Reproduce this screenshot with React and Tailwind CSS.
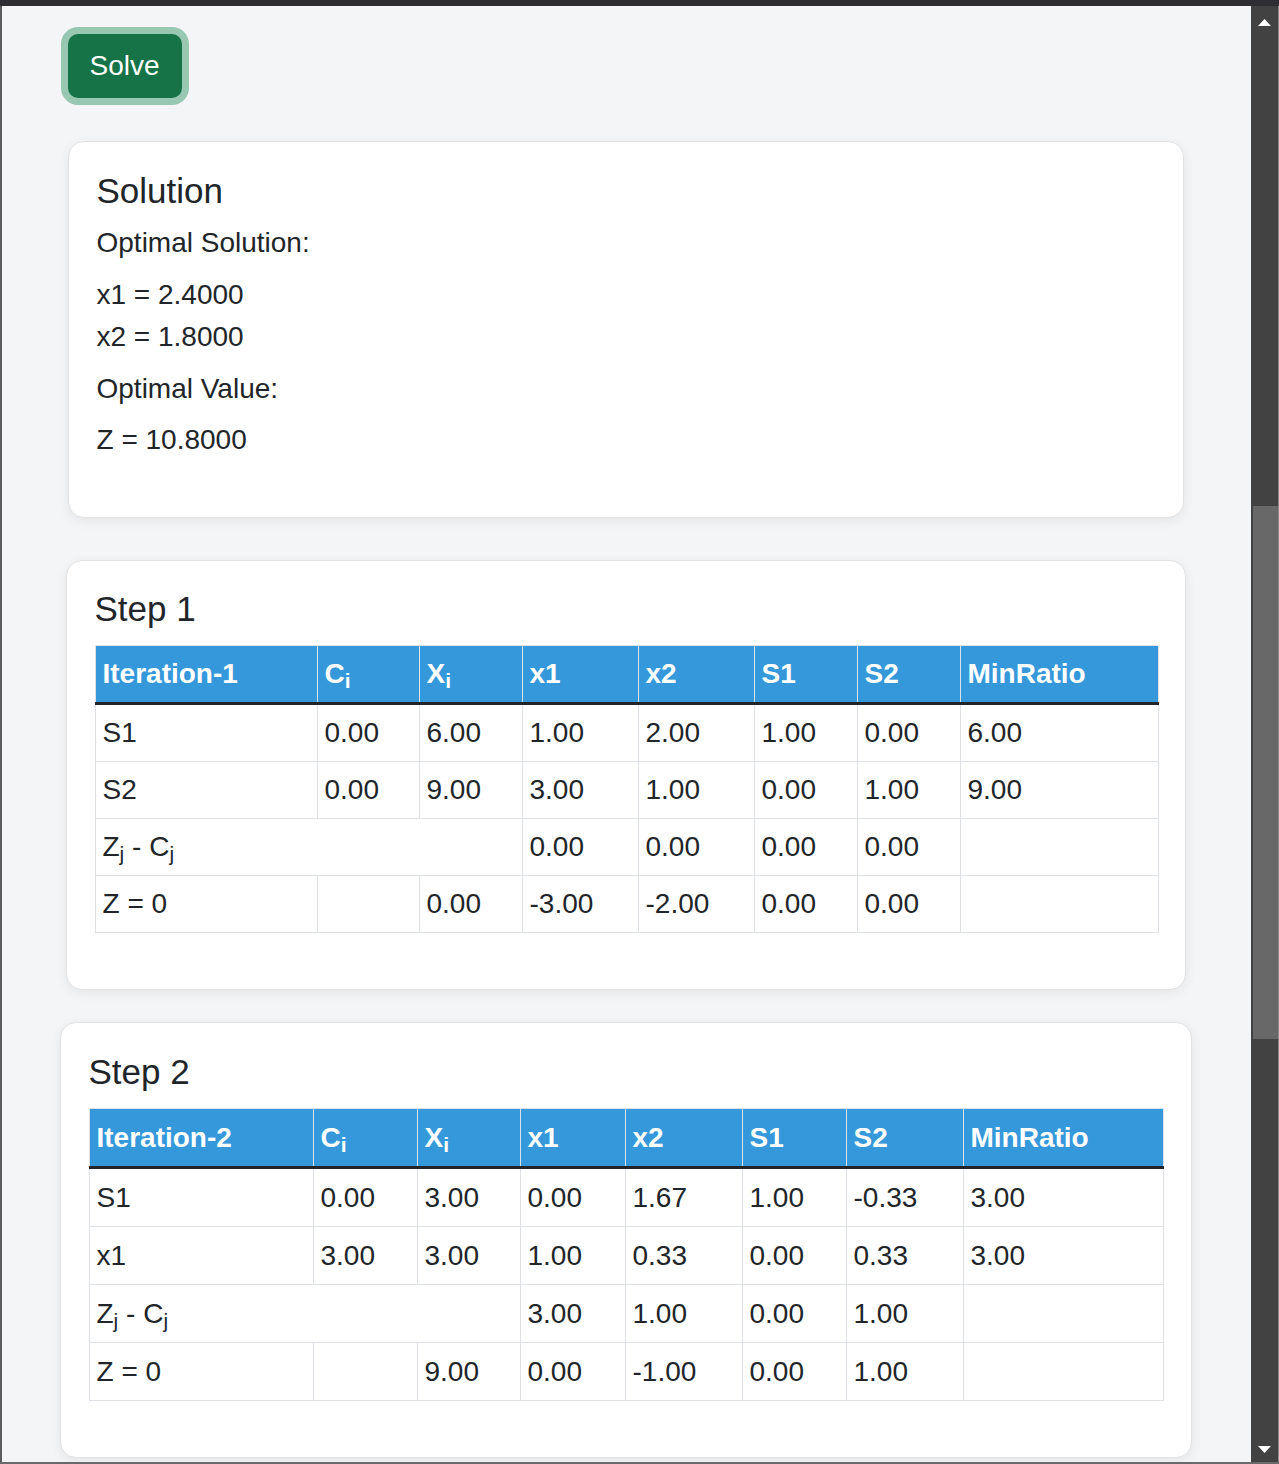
import React from 'react'

const zjcj = (
  <>
    Z<sub>j</sub> - C<sub>j</sub>
  </>
)

const steps = [
  {
    title: 'Step 1',
    label: 'Iteration-1',
    cardClass: 'mt-[42px] w-[1120px] pt-[27px]',
    tableClass: 'w-[1063px]',
    cellPad: 'py-[7px]',
    cols: ['w-[222px]', 'w-[102px]', 'w-[103px]', 'w-[116px]', 'w-[116px]', 'w-[103px]', 'w-[103px]', 'w-[198px]'],
    rows: [
      ['S1', '0.00', '6.00', '1.00', '2.00', '1.00', '0.00', '6.00'],
      ['S2', '0.00', '9.00', '3.00', '1.00', '0.00', '1.00', '9.00'],
      [{ node: zjcj, span: 3 }, '0.00', '0.00', '0.00', '0.00', ''],
      ['Z = 0', '', '0.00', '-3.00', '-2.00', '0.00', '0.00', ''],
    ],
  },
  {
    title: 'Step 2',
    label: 'Iteration-2',
    cardClass: 'mt-[32px] w-[1132px] pt-[28px]',
    tableClass: 'w-[1074px]',
    cellPad: 'py-[7.5px]',
    cols: ['w-[224px]', 'w-[104px]', 'w-[103px]', 'w-[105px]', 'w-[117px]', 'w-[104px]', 'w-[117px]', 'w-[200px]'],
    rows: [
      ['S1', '0.00', '3.00', '0.00', '1.67', '1.00', '-0.33', '3.00'],
      ['x1', '3.00', '3.00', '1.00', '0.33', '0.00', '0.33', '3.00'],
      [{ node: zjcj, span: 3 }, '3.00', '1.00', '0.00', '1.00', ''],
      ['Z = 0', '', '9.00', '0.00', '-1.00', '0.00', '1.00', ''],
    ],
  },
]

function StepCard({ step }) {
  const headers = [
    step.label,
    <>C<sub>i</sub></>,
    <>X<sub>i</sub></>,
    'x1',
    'x2',
    'S1',
    'S2',
    'MinRatio',
  ]

  return (
    <div className={`rounded-[16px] border border-[#e2e2e2] bg-white px-[28px] pb-[28px] shadow-[0_3px_12px_rgba(0,0,0,0.07)] ${step.cardClass}`}>
      <h5 className="text-[35px] leading-[42px] mb-[15px]">{step.title}</h5>
      <table className={`table-fixed border-collapse mb-[28px] ${step.tableClass}`}>
        <colgroup>
          {step.cols.map((c, i) => (
            <col key={i} className={c} />
          ))}
        </colgroup>
        <thead>
          <tr className="bg-[#3498db] text-white">
            {headers.map((h, i) => (
              <th
                key={i}
                className={`border border-[#dee2e6] border-b-[3px] border-b-[#212529] px-[7px] text-left font-bold ${step.cellPad}`}
              >
                {h}
              </th>
            ))}
          </tr>
        </thead>
        <tbody>
          {step.rows.map((row, r) => (
            <tr key={r}>
              {row.map((cell, c) =>
                typeof cell === 'object' && cell.span ? (
                  <td key={c} colSpan={cell.span} className={`border border-[#dee2e6] px-[7px] ${step.cellPad}`}>
                    {cell.node}
                  </td>
                ) : (
                  <td key={c} className={`border border-[#dee2e6] px-[7px] ${step.cellPad}`}>
                    {cell}
                  </td>
                )
              )}
            </tr>
          ))}
        </tbody>
      </table>
    </div>
  )
}

export default function App() {
  return (
    <div className="flex h-[1464px] w-[1279px] flex-col overflow-hidden bg-[#6a6a6a] font-['Liberation_Sans',Arial,sans-serif] text-[28px] leading-[42px] text-[#212529]">
      {/* window top edge */}
      <div className="h-[6px] shrink-0 bg-[#2e2e32]" />

      <div className="flex min-h-0 flex-1">
        <div className="w-[2px] shrink-0 bg-[#5c5c5c]" />

        {/* Main content */}
        <div className="flex min-w-0 flex-1 flex-col items-center overflow-hidden bg-[#f4f5f7] pr-[2px]">
          <div className="w-[1116px] pt-[28px]">
            <button className="h-[64px] w-[114px] rounded-[10px] bg-[#157347] text-white shadow-[0_0_0_7px_rgba(60,153,110,0.5)]">
              Solve
            </button>
          </div>

          <div className="mt-[43px] w-[1116px] rounded-[16px] border border-[#e2e2e2] bg-white p-[28px] shadow-[0_3px_12px_rgba(0,0,0,0.07)]">
            <h5 className="text-[35px] leading-[42px] mb-[10px]">Solution</h5>
            <p className="mb-[10px]">Optimal Solution:</p>
            <div className="mb-[10px]">
              <p>x1 = 2.4000</p>
              <p>x2 = 1.8000</p>
            </div>
            <p className="mb-[9px]">Optimal Value:</p>
            <p className="mb-[28px]">Z = 10.8000</p>
          </div>

          {steps.map((step) => (
            <StepCard key={step.title} step={step} />
          ))}
        </div>

        {/* Scrollbar */}
        <div className="flex w-[27px] shrink-0 flex-col bg-[#424242]">
          <div className="flex h-[34px] shrink-0 justify-center pt-[13px]">
            <svg width="13" height="7" viewBox="0 0 13 7">
              <polygon points="6.5,0 13,7 0,7" fill="#fff" />
            </svg>
          </div>
          <div className="h-[466px] shrink-0" />
          <div className="h-[533px] shrink-0 pl-[2px]">
            <div className="h-full bg-[#686868]" />
          </div>
          <div className="flex-1" />
          <div className="flex h-[34px] shrink-0 justify-center pt-[18px]">
            <svg width="13" height="7" viewBox="0 0 13 7">
              <polygon points="0,0 13,0 6.5,7" fill="#fff" />
            </svg>
          </div>
        </div>
        <div className="w-[1px] shrink-0 bg-[#8a8a8a]" />
      </div>

      <div className="h-[2px] shrink-0 bg-[#6a6a6a]" />
    </div>
  )
}
